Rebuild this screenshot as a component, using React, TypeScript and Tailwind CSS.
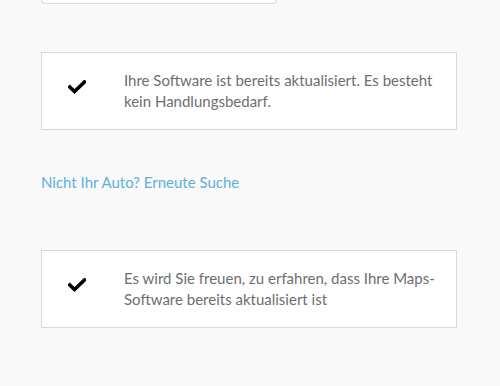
import React from 'react';

function Check() {
  return (
    <svg width="18" height="14" viewBox="0 0 18 14" className="shrink-0">
      <path d="M1.8 7 L6.5 11.5 L16.5 2" fill="none" stroke="#000" strokeWidth="3.6" strokeLinecap="square" strokeLinejoin="miter" />
    </svg>
  );
}

function Notice({ text }: { text: string }) {
  return (
    <div className="w-[416px] h-[78px] bg-white border border-[#d9d9d9] flex items-center">
      <div className="w-[82px] pl-[26px] flex items-center -mt-[8px]">
        <Check />
      </div>
      <p className="w-[326px] text-[15px] leading-[21px] text-[#6e6e6e]">{text}</p>
    </div>
  );
}

export default function App() {
  return (
    <div className="min-h-screen w-[500px] bg-[#f9f9f9] pl-[41px] font-['Lato','Open_Sans',sans-serif]">
      {/* bottom edge of the field above */}
      <div className="w-[236px] h-[4px] bg-white border-x border-b border-[#d9d9d9] rounded-b-[4px]" />

      <div className="pt-[48px]">
        <Notice text="Ihre Software ist bereits aktualisiert. Es besteht kein Handlungsbedarf." />
      </div>

      <div className="pt-[42px] h-[61px]">
        <a href="#" className="block text-[15px] leading-[20px] text-[#5eb0dc]">
          Nicht Ihr Auto? Erneute Suche
        </a>
      </div>

      <div className="pt-[59px]">
        <Notice text="Es wird Sie freuen, zu erfahren, dass Ihre Maps-Software bereits aktualisiert ist" />
      </div>
    </div>
  );
}
